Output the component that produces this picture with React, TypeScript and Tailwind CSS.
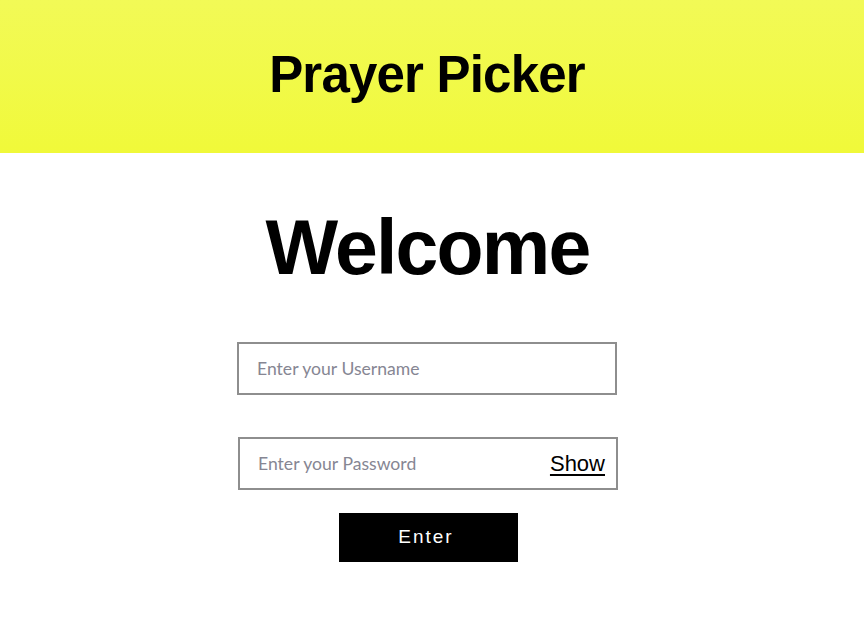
import React, { useState } from 'react';

const App: React.FC = () => {
    const [showPassword, setShowPassword] = useState(false);

    return (
        <div className="min-h-[642px] bg-white font-['Liberation_Sans',Arial,sans-serif] text-black">
            <header className="h-[153px] bg-gradient-to-b from-[#f2fa56] to-[#f0f939] pt-[49px] pr-[10px]">
                <h1 className="text-center text-[51px] leading-[51px] font-bold tracking-[-0.8px]">
                    Prayer Picker
                </h1>
            </header>

            <main className="flex flex-col items-center pt-[56px] pr-[9px]">
                <h2 className="text-[77px] leading-[77px] font-bold tracking-[-1.8px]">Welcome</h2>

                <form className="mt-[56px] flex flex-col items-center" onSubmit={(e) => e.preventDefault()}>
                    <div className="w-[380px] h-[53px] border-2 border-[#8e8e8e] flex items-center mr-[1px]">
                        <input
                            type="text"
                            placeholder="Enter your Username"
                            className="w-full h-full pl-[18px] pr-3 bg-transparent outline-none text-[17.6px] text-black placeholder:text-[#868693] font-['Lato',sans-serif]"
                        />
                    </div>

                    <div className="mt-[42px] w-[380px] h-[53px] border-2 border-[#8e8e8e] flex items-center ml-[1px]">
                        <input
                            type={showPassword ? 'text' : 'password'}
                            placeholder="Enter your Password"
                            className="flex-1 min-w-0 h-full pl-[18px] pr-2 bg-transparent outline-none text-[17.6px] text-black placeholder:text-[#868693] font-['Lato',sans-serif]"
                        />
                        <button
                            type="button"
                            onClick={() => setShowPassword(!showPassword)}
                            className="mr-[11px] text-[22px] leading-none underline decoration-2 underline-offset-[3px] text-black"
                        >
                            Show
                        </button>
                    </div>

                    <button
                        type="submit"
                        className="mt-[23px] ml-[1px] w-[179px] h-[49px] bg-black text-white text-[19px] tracking-[2px] pr-[4px]"
                    >
                        Enter
                    </button>
                </form>
            </main>
        </div>
    );
};

export default App;
